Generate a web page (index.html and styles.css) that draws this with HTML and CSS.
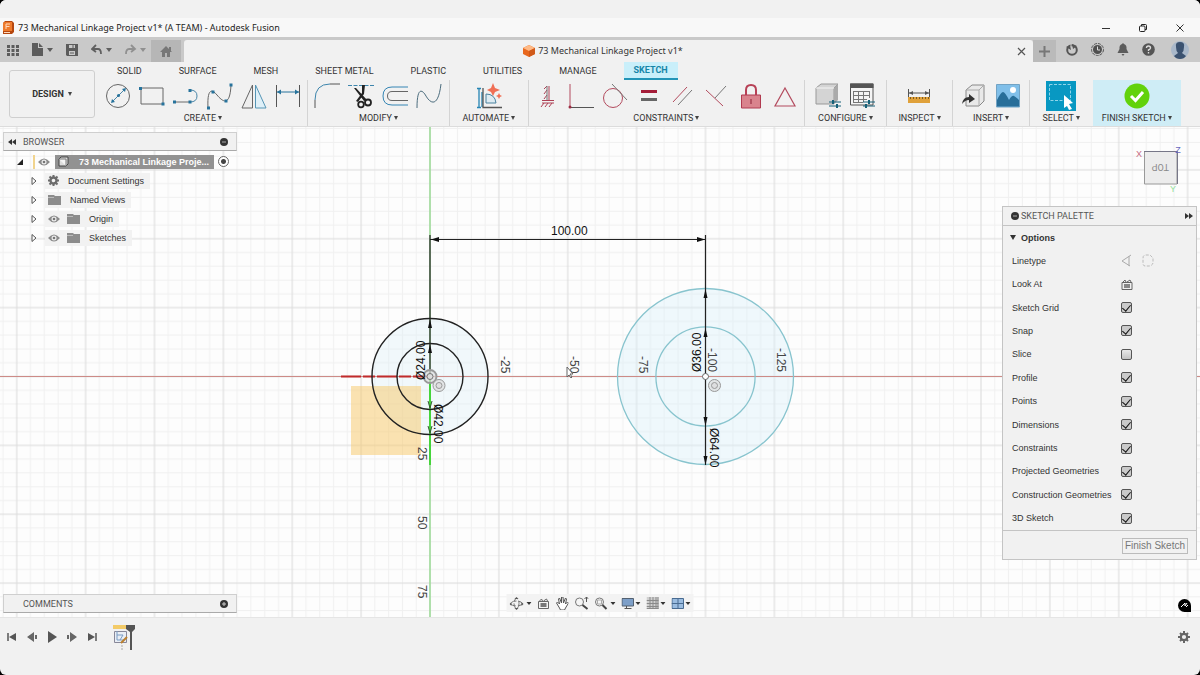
FILE: index.html
```html
<!DOCTYPE html>
<html lang="en">
<head>
<meta charset="utf-8">
<title>73 Mechanical Linkage Project v1* (A TEAM) - Autodesk Fusion</title>
<link rel="stylesheet" href="styles.css">
</head>
<body>
<div class="window">
  <header class="titlebar">
    <svg class="app-logo" width="12" height="14" viewBox="0 0 12 14"><path d="M1 2 3 0H10L12 2V11L10 13H1Z" fill="#b5470f"/><path d="M1 2 3 1H10V10H1Z" fill="#ee7a2c"/><path d="M4 8V3H8M4 5.5H7.5" stroke="#ffd9bd" fill="none"/><path d="M2 11.5H8" stroke="#ffd9bd"/></svg>
    <h1 class="window-title">73 Mechanical Linkage Project v1* (A TEAM) - Autodesk Fusion</h1>
    <div class="window-controls">
      <button aria-label="Minimize"><svg width="10" height="10"><path d="M1 5.5H9" stroke="#333"/></svg></button>
      <button aria-label="Restore"><svg width="10" height="10" fill="none" stroke="#222"><rect x="1.5" y="3" width="5.500" height="5.500" rx="1"/><path d="M3.500 3V1.500H7.500Q8.500 1.500 8.500 2.500V6.500H7"/></svg></button>
      <button aria-label="Close window"><svg width="10" height="10"><path d="M1.500 1.500 8.500 8.500M8.500 1.500 1.500 8.500" stroke="#333"/></svg></button>
    </div>
  </header>

  <nav class="docbar">
    <div class="quick">
      <button aria-label="Data panel"><svg width="12" height="12" fill="#5c5c5c"><path d="M0 1h3v3H0zM4.500 1h3v3h-3zM9 1h3v3H9zM0 5h3v3H0zM4.500 5h3v3h-3zM9 5h3v3H9zM0 9h3v3H0zM4.500 9h3v3h-3zM9 9h3v3H9z"/></svg></button>
      <button aria-label="File"><svg width="21" height="13" fill="#5c5c5c"><path d="M0 0H6V5H11V13H0ZM7 0 11 4H7ZM15 5H21L18 9Z"/></svg></button>
      <button aria-label="Save"><svg width="12" height="12"><path d="M0 0H12V12H1L0 11Z" fill="#5c5c5c"/><path d="M3 1H9V4H3ZM3 7H9V11H3Z" fill="#c9c9c9"/><path d="M7 1V4M4 9H8" stroke="#5c5c5c"/></svg></button>
      <button aria-label="Undo"><svg width="21" height="12"><path d="M5 1 1 5 5 8M1 5H7Q10 5 10 10" fill="none" stroke="#606060" stroke-width="1.800"/><path d="M15 4H21L18 8Z" fill="#606060"/></svg></button>
      <button aria-label="Redo"><svg width="21" height="12"><path d="M6 1 10 5 6 8M10 5H4Q1 5 1 10" fill="none" stroke="#909090" stroke-width="1.800"/><path d="M15 4H21L18 8Z" fill="#909090"/></svg></button>
    </div>
    <button class="home-tab" aria-label="Home"><svg width="12" height="11"><path d="M0 6 6 0 9 3V1H11V5L12 6H10V11H7V7H5V11H2V6Z" fill="#777"/></svg></button>
    <div class="doc-tab">
      <span class="doc-name"><svg width="12" height="12"><path d="M6 0 12 3V9L6 12 0 9V3Z" fill="#e8681e"/><path d="M6 0 12 3 6 6 0 3Z" fill="#ffba86"/><path d="M6 6 12 3V9L6 12Z" fill="#d05a1a"/></svg>73 Mechanical Linkage Project v1*</span>
      <button aria-label="Close document"><svg width="9" height="9"><path d="M1 1 8 8M8 1 1 8" stroke="#555" stroke-width="1.200"/></svg></button>
    </div>
    <button class="new-tab" aria-label="New tab"><svg width="11" height="11"><path d="M5.500 0V11M0 5.500H11" stroke="#777" stroke-width="2"/></svg></button>
    <div class="account">
      <button aria-label="Extensions"><svg width="12" height="12"><circle cx="6" cy="6" r="4.800" fill="none" stroke="#555" stroke-width="2"/><path d="M0 3 5 6 4 1ZM6 0 7 5 11 2" fill="#555"/><path d="M5 0V3M7 7 5 5" stroke="#c9c9c9"/></svg></button>
      <button aria-label="Job status"><svg width="13" height="13"><circle cx="6.500" cy="6.500" r="6" fill="none" stroke="#555" stroke-dasharray="3 1"/><circle cx="6.500" cy="6.500" r="4.500" fill="#505050"/><path d="M6.500 3.500V7H9" stroke="#ddd" fill="none"/></svg></button>
      <button aria-label="Notifications"><svg width="12" height="13" fill="#5c5c5c"><path d="M6 0 7 1Q10 2 9.500 6L11.500 10H.5L2.500 6Q2 2 5 1ZM4.500 11H7.500L6 13Z"/></svg></button>
      <button aria-label="Help"><svg width="13" height="13"><circle cx="6.500" cy="6.500" r="6.300" fill="#555"/><path d="M4.500 5Q4.500 3 6.500 3T8.500 5Q8.500 6 6.500 7V8M6.500 9V10.500" fill="none" stroke="#ddd" stroke-width="1.400"/></svg></button>
      <button aria-label="Profile"><svg width="18" height="18"><circle cx="9" cy="9" r="9" fill="#a9b8ca"/><path d="M5 6Q4 1 9 1T13 6Q13 10 11 12L15 15Q13 18 9 18T3 15L7 12Q5 10 5 6Z" fill="#3b5270"/></svg></button>
    </div>
  </nav>

  <section class="ribbon">
    <button class="workspace">DESIGN <i class="caret"></i></button>
    <div class="ribbon-main">
      <div class="tabs">
        <button>SOLID</button><button>SURFACE</button><button>MESH</button><button>SHEET METAL</button><button>PLASTIC</button><button>UTILITIES</button><button>MANAGE</button><button class="active">SKETCH</button>
      </div>
      <div class="groups">
        <div class="group create">
          <div class="tools">
            <button aria-label="Circle"><svg class="ic" viewBox="0 0 26 28"><circle cx="13" cy="14" r="11.500" fill="none" stroke="#666"/><path d="M7 20 20 7" stroke="#4a86a8"/><path d="M6 21 7 17 10 20ZM21 6 17 7 20 10Z" fill="#27739c"/><circle cx="13.500" cy="13.500" r="1.500" fill="#27739c"/></svg></button>
            <button aria-label="Rectangle"><svg class="ic" viewBox="0 0 26 28"><path d="M2 6H24V22H2Z" fill="none" stroke="#666"/><path d="M0 5H3V8H0ZM22.500 20.500H25.500V23.500H22.500Z" fill="#27739c"/></svg></button>
            <button aria-label="Line"><svg class="ic" viewBox="0 0 26 28"><path d="M1 20H17" stroke="#6b6b6b"/><path d="M17 20Q24 20 24 14T17 8" fill="none" stroke="#4a86a8"/><path d="M0 18.500H3V21.500H0ZM15.500 18.500H18.500V21.500H15.500ZM15.500 7H18.500V10H15.500Z" fill="#27739c"/></svg></button>
            <button aria-label="Spline"><svg class="ic" viewBox="0 0 26 28"><path d="M1 26C0 6 5 7 10 13S23 26 24 3" fill="none" stroke="#666"/><path d="M0 24.500H3V27.500H0ZM4.500 8.500H7.500V11.500H4.500ZM17.500 17.500H20.500V20.500H17.500ZM22.500 1.500H25.500V4.500H22.500Z" fill="#27739c"/></svg></button>
            <button aria-label="Mirror"><svg class="ic" viewBox="0 0 26 28"><path d="M11.500 3V26H1Z" fill="#eee" stroke="#666"/><path d="M14.500 3V26H25Z" fill="#dff0f8" stroke="#5595b5"/></svg></button>
            <button aria-label="Dimension"><svg class="ic" viewBox="0 0 26 28"><path d="M1.500 3V25M24.500 3V25" stroke="#555"/><path d="M2 10H24" stroke="#27739c"/><path d="M2 10 6 7.500V12.500ZM24 10 20 7.500V12.500Z" fill="#27739c"/></svg></button>
          </div><button class="menu">CREATE <i class="caret"></i></button>
        </div>
        <div class="group modify">
          <div class="tools">
            <button aria-label="Fillet"><svg class="ic" viewBox="0 0 26 28"><path d="M1 26V18M16 2H26" stroke="#555"/><path d="M1 18Q1 2 16 2" fill="none" stroke="#3d85ac"/></svg></button>
            <button aria-label="Trim"><svg class="ic" viewBox="0 0 26 28"><path d="M0 3.500H26" stroke="#3d85ac" stroke-dasharray="4 1.500"/><path d="M6 6 8 6 19 18 16 19ZM14 3H17L16 12 10 20 8 19 14 11Z" fill="#222"/><circle cx="13" cy="22.500" r="2.800" fill="none" stroke="#222" stroke-width="1.800"/><circle cx="20" cy="20.500" r="3" fill="none" stroke="#222" stroke-width="1.800"/></svg></button>
            <button aria-label="Offset"><svg class="ic" viewBox="0 0 26 28"><path d="M26 5H10Q1 5 1 14T10 23H26" fill="none" stroke="#3485b4"/><path d="M26 9.500H10Q5.500 9.500 5.500 14T10 18.500H26" fill="none" stroke="#666"/></svg></button>
            <button aria-label="Control spline"><svg class="ic" viewBox="0 0 26 28"><path d="M1 26C1 5 6 7 10 14S22 27 25 2" fill="none" stroke="#4b6c7d"/></svg></button>
          </div><button class="menu">MODIFY <i class="caret"></i></button>
        </div>
        <div class="group automate">
          <div class="tools"><button aria-label="Automated constraint"><svg class="ic" viewBox="0 0 26 28"><path d="M3 7V25M1 6.500H5M1 25.500H5M6 10V25" stroke="#2685b4" stroke-width="1.300"/><path d="M7 6V25.500H26" fill="none" stroke="#555" stroke-width="1.300"/><path d="M10 21V12Q19 12 20 21Z" fill="#deebf2" stroke="#4b829f"/><path d="M17 1 19 6 24 8 19 10 17 14 15 10 11 8 15 6ZM23 11 24 13 26 14 24 15 23 17 22 15 20 14 22 13Z" fill="#f06f55"/></svg></button></div>
          <button class="menu">AUTOMATE <i class="caret"></i></button>
        </div>
        <div class="group constraints">
          <div class="tools">
            <button aria-label="Horizontal vertical"><svg class="ic" viewBox="0 0 26 28"><path d="M15 4V18M8 18.500H20M8 21H20M7 25 10 21M11 25 14 21M15 25 18 21M10 17 13 13M10 12 13 8M10 7 13 4" stroke="#ae4055"/><path d="M13 4V18" stroke="#777"/></svg></button>
            <button aria-label="Coincident"><svg class="ic" viewBox="0 0 26 28"><path d="M2 2V25" stroke="#b34b5e"/><path d="M2 25.500H26" stroke="#555"/><circle cx="2" cy="25" r="1.500" fill="#9d2d43"/></svg></button>
            <button aria-label="Tangent"><svg class="ic" viewBox="0 0 26 28"><circle cx="11" cy="16" r="9.500" fill="none" stroke="#b34b5e"/><path d="M10 2 25 18" stroke="#777"/></svg></button>
            <button aria-label="Equal"><svg class="ic" viewBox="0 0 26 28"><path d="M5 8H21V11H5Z" fill="#a41d38"/><path d="M5 16H21V19H5Z" fill="#666"/></svg></button>
            <button aria-label="Parallel"><svg class="ic" viewBox="0 0 26 28"><path d="M3 20 17 5" stroke="#b34b5e"/><path d="M8 23 22 8" stroke="#777"/></svg></button>
            <button aria-label="Perpendicular"><svg class="ic" viewBox="0 0 26 28"><path d="M2 8 19 24" stroke="#b34b5e"/><path d="M11 16 22 4" stroke="#777"/></svg></button>
            <button aria-label="Fix"><svg class="ic" viewBox="0 0 26 28"><path d="M8 13V8Q8 3 13 3T18 8V13" fill="none" stroke="#b74156" stroke-width="2"/><path d="M3.500 13H22.500V26H3.500Z" fill="#d9838d" stroke="#b13b50"/><path d="M13 17V22" stroke="#8d2036"/></svg></button>
            <button aria-label="Symmetry"><svg class="ic" viewBox="0 0 26 28"><path d="M13 6 23 24H3Z" fill="none" stroke="#b34b5e" stroke-width="1.200"/></svg></button>
          </div><button class="menu">CONSTRAINTS <i class="caret"></i></button>
        </div>
        <div class="group configure">
          <div class="tools">
            <button aria-label="Configure"><svg class="ic" viewBox="0 0 26 28"><path d="M1 6 6 2H23L19 6V22H1Z" fill="#d4d4d4" stroke="#999"/><path d="M19 6 23 2V18L19 22Z" fill="#aaa"/><path d="M1 6H19" stroke="#f5f5f5"/><path d="M14 20H26M14 24H26" stroke="#176178"/><path d="M18 18V22M22 22V26" stroke="#176178" stroke-width="2"/></svg></button>
            <button aria-label="Configuration table"><svg class="ic" viewBox="0 0 26 28"><path d="M1.500 2H24V23H1.500Z" fill="#f5f5f5" stroke="#555"/><path d="M1 1.500H24.500V6H1Z" fill="#555"/><path d="M4 9.500H21M4 13.500H21M4 17.500H18M4 20.500H14M4.500 9V20M9.500 9V20M14.500 9V20M20.500 9V16" stroke="#777"/><path d="M14 20H26M14 24H26" stroke="#176178"/><path d="M20 18V22M17 22V26" stroke="#176178" stroke-width="2"/></svg></button>
          </div><button class="menu">CONFIGURE <i class="caret"></i></button>
        </div>
        <div class="group inspect">
          <div class="tools"><button aria-label="Measure"><svg class="ic" viewBox="0 0 26 28"><path d="M2.500 7V15M23.500 7V15M3 11H23" stroke="#555"/><path d="M3 11 7 9V13ZM23 11 19 9V13Z" fill="#555"/><path d="M2 15H24V21H2Z" fill="#e0a13a"/><path d="M4.500 15V17M7.500 15V17M10.500 15V17M13.500 15V17M16.500 15V17M19.500 15V17M22.500 15V17" stroke="#805b1e"/></svg></button></div>
          <button class="menu">INSPECT <i class="caret"></i></button>
        </div>
        <div class="group insert">
          <div class="tools">
            <button aria-label="Insert derive"><svg class="ic" viewBox="0 0 26 28"><path d="M5 8 11 3H23V19L18 24H5Z" fill="#e9e9e9" stroke="#888"/><path d="M5 8H18V24M18 8 23 3" fill="none" stroke="#aaa"/><path d="M1 22Q2 15 8 15V12L14 17 8 21V18Q4 18 1 22Z" fill="#333"/></svg></button>
            <button aria-label="Insert image"><svg class="ic" viewBox="0 0 26 28"><path d="M1.500 2.500H24.500V25H1.500Z" fill="#80bfe9" stroke="#72a3c4"/><path d="M2 18Q6 10 8 10T14 18Q17 13 19 14T24 18V24.500H2Z" fill="#286e99"/><circle cx="18" cy="8" r="3" fill="#fff"/></svg></button>
          </div><button class="menu">INSERT <i class="caret"></i></button>
        </div>
        <div class="group select">
          <div class="tools"><button aria-label="Select"><svg width="30" height="30"><path d="M0 0H30V30H0Z" fill="#0898c2"/><path d="M3.500 3.500H24.500V19.500H3.500Z" fill="none" stroke="#8fd5ea" stroke-dasharray="3 1.500"/><path d="M18 14 27 22 23 23 26 28 23 29 21 25 18 27Z" fill="#fff"/></svg></button></div>
          <button class="menu">SELECT <i class="caret"></i></button>
        </div>
        <div class="group finish">
          <div class="tools"><button aria-label="Finish"><svg class="ic" viewBox="0 0 26 28"><circle cx="13" cy="14" r="12.500" fill="#62d20b"/><path d="M7 14 11.500 18.500 19 10" fill="none" stroke="#fff" stroke-width="3"/></svg></button></div>
          <button class="menu">FINISH SKETCH <i class="caret"></i></button>
        </div>
      </div>
    </div>
  </section>

  <main class="stage">
    <svg class="drawing" width="100%" height="100%">
      <defs>
        <pattern id="grid" patternUnits="userSpaceOnUse" x="430" y="249.500" width="68.875" height="68.875">
          <path d="M13.775 0V69M27.550 0V69M41.325 0V69M55.100 0V69M0 13.775H69M0 27.550H69M0 41.325H69M0 55.100H69" stroke="#f0f0f0"/>
          <path d="M0 0V68.875M68.875 0V68.875M0 0H68.875M0 68.875H68.875" stroke="#dadada"/>
        </pattern>
      </defs>
      <rect width="100%" height="100%" fill="url(#grid)"/>
      <circle cx="430" cy="249.500" r="58" fill="#def0f8" fill-opacity=".4"/>
      <circle cx="705.500" cy="249.500" r="88" fill="#d9f0fa" fill-opacity=".4"/>
      <path d="M0 249.500H1200" stroke="#cd8b87"/>
      <path d="M430 0V490" stroke="#9bdb96" stroke-width="1.500"/>
      <path d="M351 259H421V328H351Z" fill="#f8c766" fill-opacity=".5"/>
      <path d="M341 249.500H430" stroke="#c22b2b" stroke-width="2" stroke-dasharray="20 2 12 2"/>
      <path d="M430 250V338" stroke="#45d43b" stroke-width="2"/>
      <g fill="none" stroke="#222" stroke-width="1.400"><circle cx="430" cy="249.500" r="58"/><circle cx="430" cy="249.500" r="33"/></g>
      <g fill="none" stroke="#88c4ce" stroke-width="1.300"><circle cx="705.500" cy="249.500" r="88"/><circle cx="705.500" cy="249.500" r="49.600"/></g>
      <path d="M430 108V249M705.500 108V338M430 112.500H705.500" stroke="#222" stroke-width="1.200"/>
      <path d="M431 112.500 439 110V115ZM705 112.500 697 110V115ZM430 192 432 201H428ZM430 217 432 226H428ZM705.500 162 707.500 171H703.500ZM705.500 201 707.500 210H703.500ZM705.500 299 707.500 290H703.500ZM705.500 338 707.500 329H703.500Z" fill="#111"/>
      <path d="M428 274 430 281 432 274M428 299 430 306 432 299" fill="none" stroke="#315c2e"/>
      <g fill="#ddd" fill-opacity=".7" stroke="#999"><circle cx="430" cy="249.500" r="6.500" stroke-width="2"/><circle cx="439" cy="258.500" r="6"/><circle cx="439" cy="258.500" r="3"/><circle cx="714.500" cy="258.500" r="6"/><circle cx="714.500" cy="258.500" r="3"/></g>
      <circle cx="430" cy="249.500" r="3" fill="#ddd" stroke="#777"/>
      <circle cx="705.500" cy="249.500" r="3" fill="#fff" stroke="#666"/>
      <g class="dims">
        <text x="551" y="108">100.00</text>
        <text transform="translate(425 253) rotate(-90)">Ø24.00</text>
        <text transform="translate(434 277) rotate(90)">Ø42.00</text>
        <text transform="translate(701 245) rotate(-90)">Ø36.00</text>
        <text transform="translate(710 301) rotate(90)">Ø64.00</text>
      </g>
      <g class="ticks">
        <text transform="translate(501 229) rotate(90)">-25</text><text transform="translate(570 229) rotate(90)">-50</text><text transform="translate(639 229) rotate(90)">-75</text><text transform="translate(708 221) rotate(90)">-100</text><text transform="translate(777 221) rotate(90)">-125</text>
        <text transform="translate(418 320) rotate(90)">25</text><text transform="translate(418 389) rotate(90)">50</text><text transform="translate(418 458) rotate(90)">75</text>
      </g>
      <path d="M567 240V250L569 248 571 251 572 250 570 247H573Z" fill="#fff" stroke="#666"/>
    </svg>

    <aside class="browser">
      <div class="bar"><svg width="8" height="6"><path d="M4 0V6L0 3ZM8 0V6L4 3Z" fill="#333"/></svg><h2>BROWSER</h2><button aria-label="Collapse browser"><svg width="8" height="8"><circle cx="4" cy="4" r="4" fill="#333"/><path d="M2 4H6" stroke="#aaa"/></svg></button></div>
      <ul class="tree">
        <li class="root"><svg class="open" width="6" height="6"><path d="M6 0V6H0Z" fill="#222"/></svg><i class="mark"></i><svg class="eye" viewBox="0 0 12 8"><path d="M0 4Q6-3 12 4Q6 11 0 4Z" fill="#8b8b8b"/><circle cx="6" cy="4" r="2.500" fill="#eee"/><circle cx="6" cy="4" r="1.300" fill="#777"/></svg>
          <span class="root-name"><svg width="11" height="11"><path d="M1 3 3 1H10V8L8 10H1Z" fill="#ddd" stroke="#444"/><path d="M1 3H8V10" fill="#f5f5f5" stroke="#777"/></svg><b>73 Mechanical Linkage Proje...</b></span>
          <input type="radio" name="active-component" aria-label="Activate component" checked></li>
        <li><svg class="twist" width="6" height="8"><path d="M1 .5 5 4 1 7.500Z" fill="#fff" stroke="#555"/></svg><span class="node"><svg width="11" height="11"><circle cx="5.500" cy="5.500" r="3" fill="none" stroke="#6c6c6c" stroke-width="2.400"/><path d="M5.500 0V2M5.500 9V11M0 5.500H2M9 5.500H11M1.500 1.500 3 3M8 8 9.500 9.500M1.500 9.500 3 8M8 3 9.500 1.500" stroke="#6c6c6c" stroke-width="2"/></svg>Document Settings</span></li>
        <li><svg class="twist" width="6" height="8"><path d="M1 .5 5 4 1 7.500Z" fill="#fff" stroke="#555"/></svg><span class="node"><svg width="13" height="10"><path d="M0 0H6L7 1H13V10H0Z" fill="#8c8c8c"/><path d="M0 2.500H6" stroke="#bbb"/></svg>Named Views</span></li>
        <li><svg class="twist" width="6" height="8"><path d="M1 .5 5 4 1 7.500Z" fill="#fff" stroke="#555"/></svg><span class="node"><svg class="eye" viewBox="0 0 12 8"><path d="M0 4Q6-3 12 4Q6 11 0 4Z" fill="#8b8b8b"/><circle cx="6" cy="4" r="2.500" fill="#eee"/><circle cx="6" cy="4" r="1.300" fill="#777"/></svg><svg width="13" height="10"><path d="M0 0H6L7 1H13V10H0Z" fill="#8c8c8c"/><path d="M0 2.500H6" stroke="#bbb"/></svg>Origin</span></li>
        <li><svg class="twist" width="6" height="8"><path d="M1 .5 5 4 1 7.500Z" fill="#fff" stroke="#555"/></svg><span class="node"><svg class="eye" viewBox="0 0 12 8"><path d="M0 4Q6-3 12 4Q6 11 0 4Z" fill="#8b8b8b"/><circle cx="6" cy="4" r="2.500" fill="#eee"/><circle cx="6" cy="4" r="1.300" fill="#777"/></svg><svg width="13" height="10"><path d="M0 0H6L7 1H13V10H0Z" fill="#8c8c8c"/><path d="M0 2.500H6" stroke="#bbb"/></svg>Sketches</span></li>
      </ul>
    </aside>

    <svg class="viewcube" width="50" height="50"><path d="M13.500 7.500H46V40H13.500Z" fill="#ececec" stroke="#999"/><path d="M13 7.500H46.500V40" fill="none" stroke="#778"/><text x="8" y="13" class="x">X</text><text x="47" y="9" class="z">Z</text><text x="39" y="48" class="y">Y</text><text transform="translate(38 20) rotate(180)" class="top">TOP</text></svg>

    <aside class="palette">
      <div class="bar"><svg width="8" height="8"><circle cx="4" cy="4" r="4" fill="#333"/><path d="M2 4H6" stroke="#aaa"/></svg><h2>SKETCH PALETTE</h2><button aria-label="Dock palette"><svg width="8" height="6"><path d="M0 0V6L4 3ZM4 0V6L8 3Z" fill="#333"/></svg></button></div>
      <h3><svg width="6" height="5"><path d="M0 0H6L3 5Z" fill="#333"/></svg>Options</h3>
      <div class="options">
        <div class="option"><span>Linetype</span><span class="linetypes"><button aria-label="Construction"><svg width="11" height="13" fill="none" stroke="#aaa"><path d="M10 1 1 7 9 12M8 2V12"/></svg></button><button aria-label="Centerline"><svg width="12" height="13" fill="none" stroke="#bbb"><path d="M1 4Q1 1 4 1H8L11 4V9Q10 12 7 12H3Q1 12 1 9Z" stroke-dasharray="3 1.500"/></svg></button></span></div>
        <div class="option"><span>Look At</span><button aria-label="Look At"><svg width="12" height="11"><path d="M1 3.500H11V10.500H1ZM2 3 4 1 5 3M6 3 9 1 10 3" fill="none" stroke="#666"/><path d="M3 5H9V9H3Z" fill="#888"/></svg></button></div>
        <div class="option"><label for="grid-on">Sketch Grid</label><input id="grid-on" type="checkbox" checked></div>
        <div class="option"><label for="snap">Snap</label><input id="snap" type="checkbox" checked></div>
        <div class="option"><label for="slice">Slice</label><input id="slice" type="checkbox"></div>
        <div class="option"><label for="profile">Profile</label><input id="profile" type="checkbox" checked></div>
        <div class="option"><label for="points">Points</label><input id="points" type="checkbox" checked></div>
        <div class="option"><label for="dimensions">Dimensions</label><input id="dimensions" type="checkbox" checked></div>
        <div class="option"><label for="constraints">Constraints</label><input id="constraints" type="checkbox" checked></div>
        <div class="option"><label for="projected">Projected Geometries</label><input id="projected" type="checkbox" checked></div>
        <div class="option"><label for="construction">Construction Geometries</label><input id="construction" type="checkbox" checked></div>
        <div class="option"><label for="sketch3d">3D Sketch</label><input id="sketch3d" type="checkbox" checked></div>
      </div>
      <div class="palette-foot"><button>Finish Sketch</button></div>
    </aside>

    <div class="comments bar"><h2>COMMENTS</h2><button aria-label="Add comment"><svg width="8" height="8"><circle cx="4" cy="4" r="4" fill="#333"/><path d="M2 4H6M4 2V6" stroke="#ccc"/></svg></button></div>

    <div class="navbar">
      <button aria-label="Orbit"><svg width="22" height="13"><g fill="none" stroke="#777"><ellipse cx="7" cy="6.500" rx="5.500" ry="2.500" stroke-dasharray="5 2"/><ellipse cx="7" cy="6.500" rx="2.500" ry="5" stroke-dasharray="5 2"/></g><path d="M7 0 9 2H5ZM7 13 9 11H5ZM0 7 2 5V9ZM14 7 12 5V9Z" fill="#555"/><path d="M17 5H22L19.500 8Z" fill="#333"/></svg></button>
      <button aria-label="Look at"><svg width="12" height="11"><path d="M1 3.500H11V10.500H1ZM2 3 4 1 5 3M6 3 9 1 10 3" fill="none" stroke="#666"/><path d="M3 5H9V9H3Z" fill="#777"/></svg></button>
      <button aria-label="Pan"><svg width="13" height="13"><path d="M4 11 1 6 2 5 4 7 3 2 4 1 6 6 6 0H7.500L8 6 10 1 11 2 10 7 12 5 13 6 10 11 9 13H5Z" fill="#fff" stroke="#555"/></svg></button>
      <button aria-label="Zoom"><svg width="14" height="13"><circle cx="5" cy="5" r="4" fill="#f5f5f5" stroke="#777"/><path d="M8 8 13 12" stroke="#444" stroke-width="2"/><path d="M12 0V5M10 2 12 0 14 2" stroke="#555" fill="none"/></svg></button>
      <button aria-label="Zoom window"><svg width="21" height="13"><circle cx="5" cy="5" r="4" fill="#f5f5f5" stroke="#777"/><path d="M3 3H7V7H3Z" fill="none" stroke="#aaa"/><path d="M8 8 12 12" stroke="#444" stroke-width="2"/><path d="M16 5H21L18.500 8Z" fill="#333"/></svg></button>
      <button aria-label="Display settings"><svg width="19" height="12"><path d="M.5 1.500H12V9H.5Z" fill="#7d9fc8" stroke="#536171"/><path d="M5 9V11M3 11.500H10" stroke="#555"/><path d="M14 5H19L16.500 8Z" fill="#333"/></svg></button>
      <button aria-label="Grid and snaps"><svg width="19" height="12"><path d="M0 0H12V12H0Z" fill="#d0d0d0"/><path d="M3.500 0V12M6.500 0V12M9.500 0V12M0 3.500H12M0 6.500H12M0 9.500H12M11.500 0V12M0 11.500H12" stroke="#8a8a8a"/><path d="M14 5H19L16.500 8Z" fill="#333"/></svg></button>
      <button aria-label="Viewports"><svg width="19" height="11"><path d="M.5 .5H12V10.500H.5Z" fill="#9abce0" stroke="#486b91"/><path d="M6.500 0V11M0 5.500H12" stroke="#486b91"/><path d="M14 4H19L16.500 7Z" fill="#333"/></svg></button>
    </div>
    <button class="assistant" aria-label="Assistant"><svg width="13" height="13"><path d="M6.500 0A6.500 6.500 0 1 0 6.500 13H13V6.500A6.500 6.500 0 0 0 6.500 0Z" fill="#000"/><path d="M3 8 7 4V7L9 4M8 8 10 6" stroke="#fff" fill="none"/></svg></button>
  </main>

  <footer class="timeline">
    <div class="playback">
      <button aria-label="Go to start"><svg width="10" height="10"><path d="M1 1V9" stroke="#555" stroke-width="1.500"/><path d="M9 1V9L2 5Z" fill="#555"/></svg></button>
      <button aria-label="Step back"><svg width="10" height="10"><path d="M7 0V10L0 5ZM8 3H10V7H8Z" fill="#666"/></svg></button>
      <button aria-label="Play"><svg width="10" height="12"><path d="M1 0 10 6 1 12Z" fill="#555"/></svg></button>
      <button aria-label="Step forward"><svg width="10" height="10"><path d="M3 0 10 5 3 10ZM0 3H2V7H0Z" fill="#666"/></svg></button>
      <button aria-label="Go to end"><svg width="10" height="10"><path d="M9 1V9" stroke="#555" stroke-width="1.500"/><path d="M1 1V9L8 5Z" fill="#555"/></svg></button>
    </div>
    <svg class="feature" width="22" height="28"><path d="M0 1H13V5H0Z" fill="#f3cb68"/><path d="M1.500 7.500H13.500V18.500H1.500Z" fill="#e9eef5" stroke="#889"/><path d="M4 7V16H11M4 11 10 11 7 16" stroke="#7a9cc3" fill="none"/><path d="M8 19 14 13" stroke="#bb802e" stroke-width="2"/><path d="M9 21V27" stroke="#aaa" stroke-dasharray="2 1"/><path d="M13 1H22V5L19 8V26H17V8L13 5Z" fill="#555"/></svg>
    <button class="prefs" aria-label="Timeline settings"><svg width="12" height="12"><circle cx="6" cy="6" r="3.200" fill="none" stroke="#666" stroke-width="2.200"/><path d="M6 0V2M6 10V12M0 6H2M10 6H12M2 2 3.500 3.500M8.500 8.500 10 10M2 10 3.500 8.500M8.500 3.500 10 2" stroke="#666" stroke-width="2"/></svg></button>
  </footer>
</div>
</body>
</html>
```
FILE: styles.css
```css
* { box-sizing: border-box; }
body { margin: 0; background: #000; color: #333; font: 9px/12px "Liberation Sans", Arial, sans-serif; }
button { margin: 0; padding: 0; border: 0; background: none; color: inherit; font: inherit; display: flex; align-items: center; justify-content: center; }
svg { display: block; flex: none; }
h1, h2, h3, ul { margin: 0; padding: 0; font-weight: normal; font-size: inherit; }
.window { display: flex; flex-direction: column; height: 100vh; overflow: hidden; border-radius: 6px; background: #f1f1f1; }

.titlebar { display: flex; align-items: center; gap: 4px; height: 37px; padding: 18px 14px 0 2px; background: linear-gradient(#f1f1f1 18px, #f8f8f8 18px); }
.window-title { flex: 1; color: #1d1d1d; font: 9px/14px "Noto Sans", sans-serif; }
.window-controls { display: flex; gap: 25px; }
.window-controls button { width: 12px; height: 14px; }

.docbar { display: flex; align-items: flex-end; height: 25px; background: #c9c9c9; }
.quick { display: flex; align-items: center; justify-content: space-between; width: 151px; height: 25px; padding: 0 5px 0 7px; }
.home-tab { width: 30px; height: 22px; margin-right: 3px; background: #b6b6b6; }
.doc-tab { flex: 1; display: flex; align-items: center; height: 22px; padding: 0 7px 0 5px; border-radius: 3px 3px 0 0; background: #f1f1f1; }
.doc-name { flex: 1; display: flex; align-items: center; justify-content: center; gap: 3px; font-family: "Noto Sans", sans-serif; }
.new-tab { width: 23px; height: 22px; background: #bababa; }
.account { display: flex; align-items: center; gap: 13px; height: 25px; padding: 0 11px 0 10px; }
.account button:last-child { margin-left: 3px; }

.ribbon { display: flex; height: 65px; border-bottom: 1px solid #dcdcdc; font-family: Roboto, sans-serif; }
.workspace { flex: none; align-self: center; width: 86px; height: 48px; margin: 0 4px 0 9px; gap: 4px; border: 1px solid #cfcfcf; border-radius: 3px; font-weight: bold; }
.caret { display: inline-block; border: 2px solid transparent; border-top: 4px solid #444; border-bottom: 0; }
.ribbon-main { flex: 1; display: flex; flex-direction: column; }
.tabs { display: flex; gap: 1px; height: 18px; }
.tabs button { padding: 0 18px; }
.tabs .active { padding: 0 10px; margin: 0 8px; background: #c9effa; color: #1685a8; font-weight: bold; border-bottom: 2px solid #2294b7; }
.groups { flex: 1; display: flex; }
.group { display: flex; flex-direction: column; align-items: center; min-width: 0; border-right: 1px solid #d4d4d4; }
.tools { display: flex; align-items: center; gap: 8px; height: 31px; }
.ic { width: 26px; height: 28px; }
.menu { gap: 2px; height: 14px; line-height: 14px; white-space: nowrap; }
.create { flex: 209 1 0; }
.modify { flex: 142 1 0; }
.automate { flex: 78 1 0; }
.constraints { flex: 277 1 0; }
.configure { flex: 81 1 0; }
.inspect { flex: 66 1 0; }
.insert { flex: 76 1 0; }
.select { flex: 63 1 0; border: 0; }
.finish { flex: 89 1 0; margin-right: 19px; border: 0; background: #cfedf6; }

.stage { position: relative; flex: 1; overflow: hidden; background: #fdfdfd; }
.drawing { position: absolute; inset: 0; }
.drawing text { font: 12px "Liberation Sans", Arial, sans-serif; }
.dims { fill: #111; }
.ticks { fill: #444; }

.bar { display: flex; align-items: center; height: 19px; padding: 0 8px 0 4px; border: 1px solid #cfcfcf; border-bottom-color: #aaa; background: #f1f1f1; color: #555; }
.bar h2 { flex: 1; font-family: Roboto, sans-serif; }
.browser { position: absolute; left: 3px; top: 5px; width: 234px; }
.browser h2 { margin-left: 7px; }
.tree { list-style: none; padding-top: 1px; }
.tree li { display: flex; align-items: center; height: 19px; padding-left: 28px; }
.tree .root { padding-left: 14px; }
.mark { width: 2px; height: 14px; margin-left: 10px; background: #f1d48e; }
.eye { width: 12px; height: 8px; }
.root .eye { margin: 0 5px 0 3px; }
.root-name { display: flex; align-items: center; gap: 10px; width: 159px; height: 14px; padding-left: 3px; background: #929292; color: #fff; white-space: nowrap; }
.root input { appearance: none; width: 11px; height: 11px; margin: 0 0 0 4px; border: 1px solid #666; border-radius: 50%; background: radial-gradient(#444 0 2px, #fff 3px); }
.twist { margin-right: 8px; }
.node { display: flex; align-items: center; gap: 7px; height: 16px; padding: 0 6px 0 3px; background: #f2f2f2; color: #333; }
.node svg:last-of-type { margin-right: 2px; }
.comments { position: absolute; left: 3px; bottom: 4px; width: 234px; }
.comments h2 { margin-left: 15px; }

.viewcube { position: absolute; right: 19px; top: 17px; }
.viewcube text { font: 9px "Liberation Sans", sans-serif; }
.viewcube .x { fill: #c66b83; text-anchor: middle; }
.viewcube .z { fill: #6767bd; text-anchor: middle; }
.viewcube .y { fill: #93e19b; }
.viewcube .top { font: 9px Roboto, sans-serif; fill: #888; }

.palette { position: absolute; right: 3px; top: 79px; width: 195px; border: 1px solid #c4c4c4; background: #f1f1f1; }
.palette .bar { padding: 0 3px 0 8px; border-width: 0 0 1px; border-color: #c4c4c4; }
.palette .bar h2 { margin-left: 2px; }
.palette h3 { display: flex; align-items: center; gap: 5px; height: 23px; padding-left: 7px; font-weight: bold; }
.options { display: grid; grid-auto-rows: 1fr; height: 281px; }
.option { display: grid; grid-template-columns: 109px 1fr; align-items: center; justify-items: start; padding-left: 9px; }
.linetypes { display: flex; gap: 10px; }
.option input { appearance: none; display: grid; justify-items: center; align-items: start; width: 11px; height: 11px; margin: 0; border: 1px solid #555; border-radius: 2px; background: linear-gradient(#e8e8e8, #c2c2c2); }
.option input:checked { background: #cacaca; }
.option input:checked::before { content: ""; width: 4px; height: 7px; border: solid #111; border-width: 0 1px 1px 0; transform: rotate(40deg); }
.palette-foot { display: flex; justify-content: flex-end; padding: 7px 8px 5px; border-top: 1px solid #c4c4c4; }
.palette-foot button { height: 16px; padding: 0 2px; border: 1px solid #bbb; color: #777; font-size: 10px; }

.navbar { position: absolute; left: 50%; bottom: 5px; transform: translateX(-50%); display: flex; align-items: center; gap: 6px; height: 18px; padding: 0 3px; background: #f3f3f3; }
.assistant { position: absolute; right: 9px; bottom: 5px; }

.timeline { display: flex; align-items: flex-start; height: 58px; padding: 6px 10px 0 7px; border-top: 1px solid #e5e5e5; }
.playback { display: flex; gap: 10px; align-items: center; height: 26px; }
.feature { margin-left: 16px; }
.prefs { height: 26px; margin-left: auto; }
```
